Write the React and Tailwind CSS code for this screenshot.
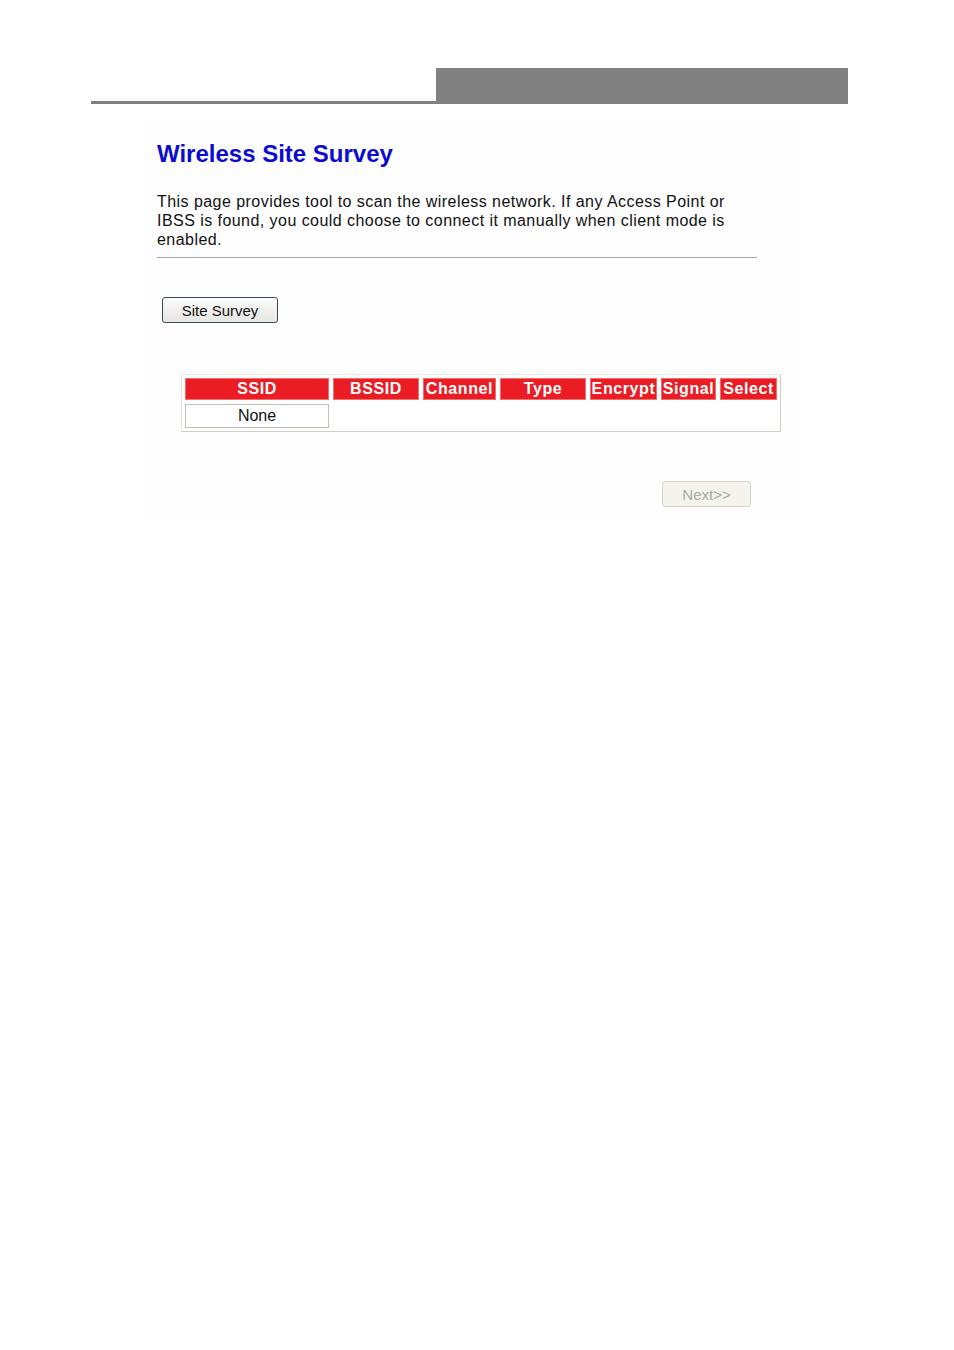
import React from "react";

const columns = [
  { label: "SSID", width: "w-[144px]" },
  { label: "BSSID", width: "w-[86px]" },
  { label: "Channel", width: "w-[73px]" },
  { label: "Type", width: "w-[86px]" },
  { label: "Encrypt", width: "w-[67px]" },
  { label: "Signal", width: "w-[55px]" },
  { label: "Select", width: "w-[57px]" },
];

function App() {
  return (
    <div className="w-[954px] h-[1350px] bg-white font-['Liberation_Sans',Arial,sans-serif] text-black">
      {/* header bar */}
      <div className="pt-[68px] pl-[91px] flex items-end">
        <div className="w-[345px] h-[3px] bg-[#808080]"></div>
        <div className="w-[412px] h-[36px] bg-[#808080]"></div>
      </div>

      {/* content panel */}
      <div className="ml-[144px] w-[658px] mt-[16px] pb-[14px] bg-[#fdfdfd]">
        <div className="pl-[13px] pt-[20px]">
          <h1 className="text-[24px] leading-[28px] font-bold text-[#0c0cd0]">
            Wireless Site Survey
          </h1>
          <p className="mt-[24px] text-[16px] leading-[19px] tracking-[0.45px] text-[#111]">
            This page provides tool to scan the wireless network. If any Access Point or
            <br />
            IBSS is found, you could choose to connect it manually when client mode is
            <br />
            enabled.
          </p>
          <div className="mt-[8px] w-[600px] h-px bg-[#a8a8a0]"></div>

          <button className="mt-[39px] ml-[5px] w-[116px] h-[26px] rounded-[3px] border border-[#3a4a5c] bg-gradient-to-b from-[#fbfbfb] to-[#e6e6e2] text-[15px] leading-none text-[#111]">
            Site Survey
          </button>
        </div>

        {/* results table */}
        <div className="ml-[37px] mt-[51px] w-[600px] border border-[#cfcfc6] border-l-[#e4e4dc] border-t-[#e8e8e0] p-[3px] bg-white">
          <div className="flex gap-[4px]">
            {columns.map((c) => (
              <div
                key={c.label}
                className={`${c.width} h-[22px] bg-[#ec1c24] border border-[#f07070] flex items-center justify-center text-white font-bold text-[16px] leading-none tracking-[0.6px]`}
              >
                {c.label}
              </div>
            ))}
          </div>
          <div className="mt-[4px] w-[144px] h-[24px] border border-[#c0c0b8] bg-white flex items-center justify-center text-[16px] text-[#111]">
            None
          </div>
        </div>

        <div className="flex justify-end pr-[51px] mt-[49px]">
          <button className="w-[89px] h-[26px] rounded-[3px] border border-[#d4d4c8] bg-[#f4f4ec] text-[15px] leading-none text-[#a8a8a8]">
            Next&gt;&gt;
          </button>
        </div>
      </div>
    </div>
  );
}

export default App;
